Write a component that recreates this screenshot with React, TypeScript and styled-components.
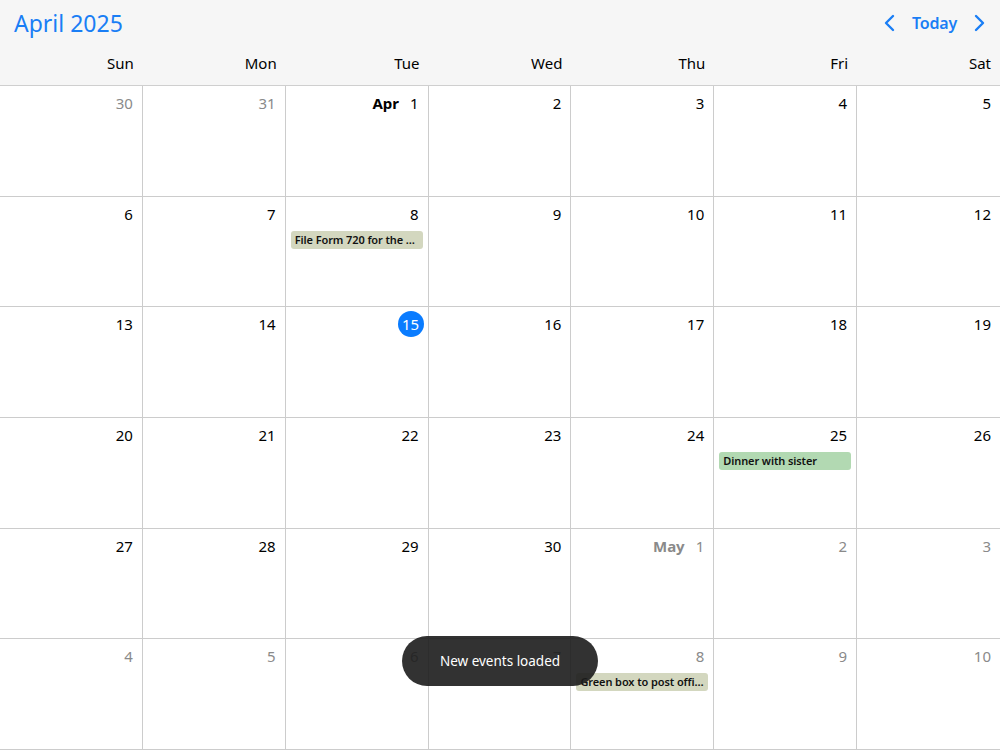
import React from "react";
import styled, { createGlobalStyle } from "styled-components";

const Global = createGlobalStyle`
  html, body { margin: 0; padding: 0; background: #fff; }
  body { font-family: "Noto Sans", "Open Sans", sans-serif; }
  * { box-sizing: border-box; }
`;

const Page = styled.div`
  width: 1000px;
  height: 750px;
  display: flex;
  flex-direction: column;
  position: relative;
  overflow: hidden;
`;

const Header = styled.div`
  background: #f6f6f6;
  border-bottom: 1px solid #cfcfcf;
  height: 86px;
  display: flex;
  flex-direction: column;
`;

const TopBar = styled.div`
  height: 46px;
  display: flex;
  align-items: center;
  justify-content: space-between;
  padding: 0 14px 0 14px;
`;

const Title = styled.div`
  color: #1a7ef5;
  font-size: 23px;
  font-weight: 400;
`;

const Nav = styled.div`
  display: flex;
  align-items: center;
  gap: 11px;
  color: #1a7ef5;
`;

const NavBtn = styled.button`
  border: none;
  background: none;
  padding: 0;
  color: #1a7ef5;
  display: flex;
  align-items: center;
  cursor: pointer;
`;

const TodayBtn = styled(NavBtn)`
  font-family: inherit;
  font-size: 16px;
  font-weight: 600;
  padding: 0 4px;
  letter-spacing: -0.2px;
`;

const WeekRow = styled.div`
  flex: 1;
  display: grid;
  grid-template-columns: repeat(7, 1fr);
  align-items: center;
`;

const WeekDay = styled.div`
  text-align: right;
  padding-right: 9px;
  font-size: 15px;
  color: #000;
  padding-bottom: 6px;
`;

const Grid = styled.div`
  flex: 1;
  display: grid;
  grid-template-columns: repeat(7, 1fr);
  grid-template-rows: repeat(6, 1fr);
`;

const Cell = styled.div<{ $lastCol: boolean }>`
  border-right: ${(p) => (p.$lastCol ? "none" : "1px solid #cccccc")};
  border-bottom: 1px solid #cccccc;
  padding: 6px 5px 0 5px;
  display: flex;
  flex-direction: column;
  gap: 6px;
  min-width: 0;
`;

const DayLine = styled.div`
  display: flex;
  justify-content: flex-end;
  align-items: center;
  gap: 11px;
  height: 22px;
  padding-right: 4px;
`;

const MonthLabel = styled.span<{ $muted: boolean }>`
  font-weight: 700;
  font-size: 15px;
  color: ${(p) => (p.$muted ? "#8a8a8a" : "#000")};
`;

const DayNum = styled.span<{ $muted: boolean }>`
  font-size: 15px;
  color: ${(p) => (p.$muted ? "#8a8a8a" : "#000")};
`;

const TodayBadge = styled.span`
  width: 26px;
  height: 26px;
  border-radius: 50%;
  background: #0a7cff;
  color: #fff;
  font-size: 15px;
  display: flex;
  align-items: center;
  justify-content: center;
  margin-right: -5px;
`;

const Chip = styled.div<{ $color: string }>`
  background: ${(p) => p.$color};
  border-radius: 3px;
  height: 18px;
  font-size: 11px;
  font-weight: 600;
  letter-spacing: -0.1px;
  color: #111;
  padding: 0 4px;
  line-height: 18px;
  white-space: nowrap;
  overflow: hidden;
  text-overflow: ellipsis;
`;

const Toast = styled.div`
  position: absolute;
  left: 402px;
  top: 636px;
  width: 196px;
  height: 50px;
  border-radius: 25px;
  background: rgba(28, 28, 28, 0.9);
  color: #fff;
  font-size: 13.5px;
  display: flex;
  align-items: center;
  justify-content: center;
`;

type Day = {
  n: number;
  muted?: boolean;
  month?: string;
  today?: boolean;
  event?: { title: string; color: string };
};

const olive = "#d3d7bf";
const green = "#b2d9b2";

const days: Day[] = [
  { n: 30, muted: true }, { n: 31, muted: true }, { n: 1, month: "Apr" }, { n: 2 }, { n: 3 }, { n: 4 }, { n: 5 },
  { n: 6 }, { n: 7 }, { n: 8, event: { title: "File Form 720 for the third quarter", color: olive } }, { n: 9 }, { n: 10 }, { n: 11 }, { n: 12 },
  { n: 13 }, { n: 14 }, { n: 15, today: true }, { n: 16 }, { n: 17 }, { n: 18 }, { n: 19 },
  { n: 20 }, { n: 21 }, { n: 22 }, { n: 23 }, { n: 24 }, { n: 25, event: { title: "Dinner with sister", color: green } }, { n: 26 },
  { n: 27 }, { n: 28 }, { n: 29 }, { n: 30 }, { n: 1, muted: true, month: "May" }, { n: 2, muted: true }, { n: 3, muted: true },
  { n: 4, muted: true }, { n: 5, muted: true }, { n: 6, muted: true }, { n: 7, muted: true }, { n: 8, muted: true, event: { title: "Green box to post office", color: olive } }, { n: 9, muted: true }, { n: 10, muted: true },
];

const weekdays = ["Sun", "Mon", "Tue", "Wed", "Thu", "Fri", "Sat"];

const Chevron = ({ dir }: { dir: "left" | "right" }) => (
  <svg width="14" height="18" viewBox="0 0 14 18" fill="none">
    <path
      d={dir === "left" ? "M10 2 L3 9 L10 16" : "M4 2 L11 9 L4 16"}
      stroke="#1a7ef5"
      strokeWidth="2.4"
      strokeLinecap="round"
      strokeLinejoin="round"
    />
  </svg>
);

export default function App() {
  return (
    <Page>
      <Global />
      <Header>
        <TopBar>
          <Title>April 2025</Title>
          <Nav>
            <NavBtn aria-label="Previous month"><Chevron dir="left" /></NavBtn>
            <TodayBtn>Today</TodayBtn>
            <NavBtn aria-label="Next month"><Chevron dir="right" /></NavBtn>
          </Nav>
        </TopBar>
        <WeekRow>
          {weekdays.map((w) => (
            <WeekDay key={w}>{w}</WeekDay>
          ))}
        </WeekRow>
      </Header>
      <Grid>
        {days.map((d, i) => (
          <Cell key={i} $lastCol={i % 7 === 6}>
            <DayLine>
              {d.month && <MonthLabel $muted={!!d.muted}>{d.month}</MonthLabel>}
              {d.today ? (
                <TodayBadge>{d.n}</TodayBadge>
              ) : (
                <DayNum $muted={!!d.muted}>{d.n}</DayNum>
              )}
            </DayLine>
            {d.event && <Chip $color={d.event.color}>{d.event.title}</Chip>}
          </Cell>
        ))}
      </Grid>
      <Toast>New events loaded</Toast>
    </Page>
  );
}
